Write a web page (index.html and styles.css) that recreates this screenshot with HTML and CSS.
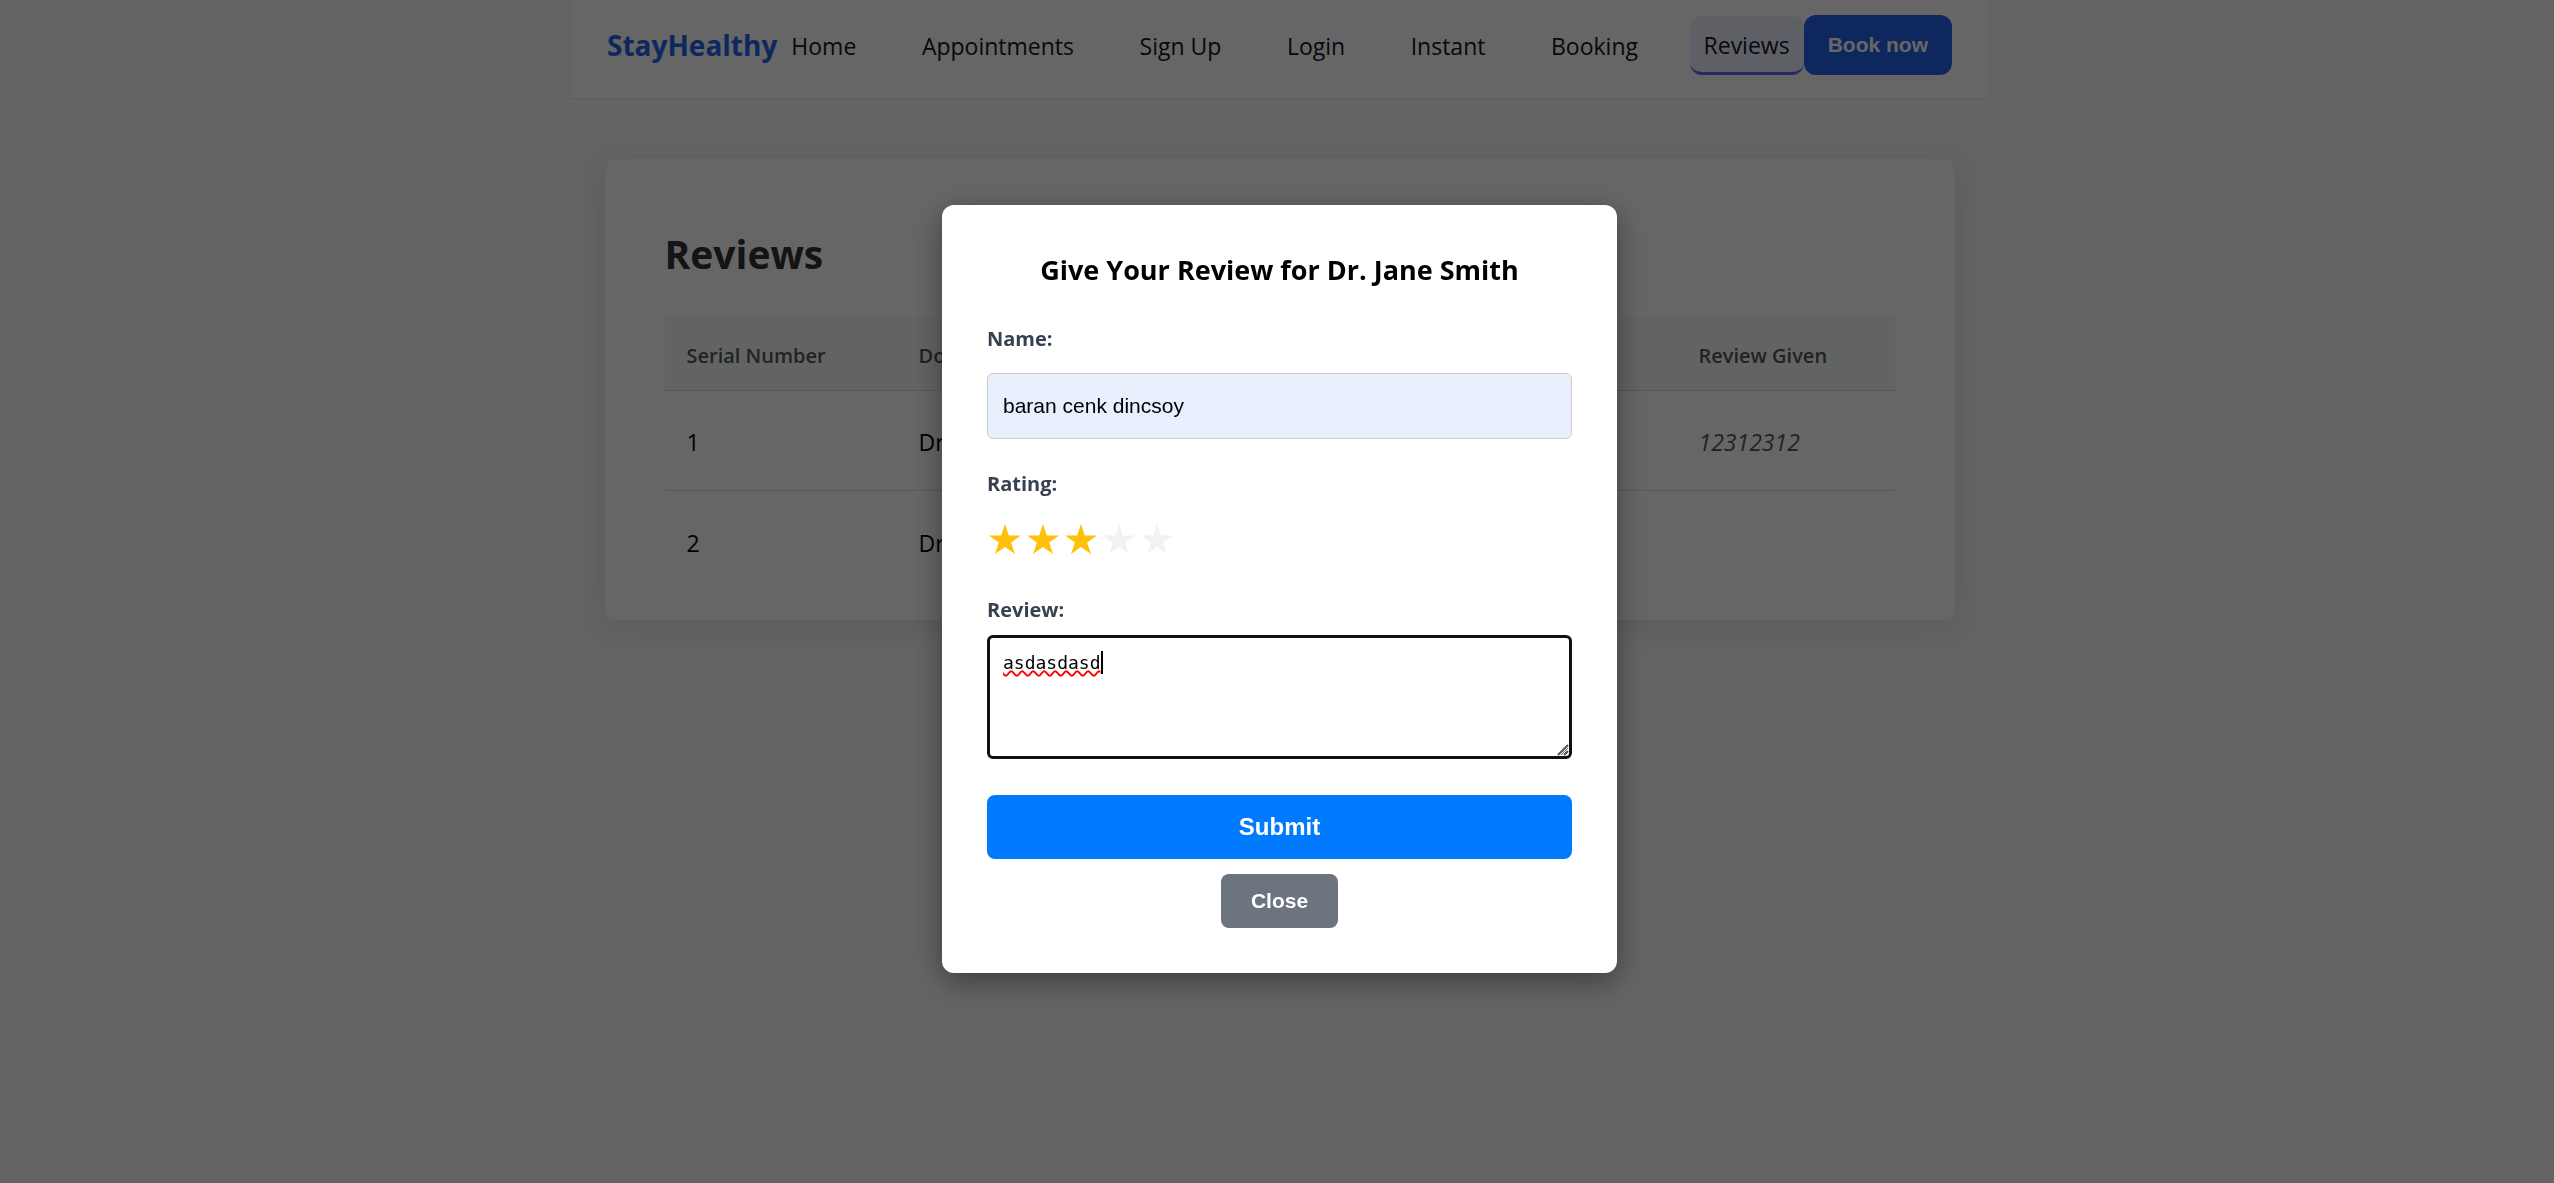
FILE: index.html
```html
<!DOCTYPE html>
<html lang="en">
<head>
<meta charset="utf-8">
<title>StayHealthy - Reviews</title>
<meta name="viewport" content="width=device-width, initial-scale=1">
<link rel="stylesheet" href="styles.css">
</head>
<body>
<div class="page">
  <header class="navbar">
    <a class="brand" href="#">StayHealthy</a>
    <nav class="nav-links">
      <a class="nav-link" href="#">Home</a>
      <a class="nav-link" href="#">Appointments</a>
      <a class="nav-link" href="#">Sign Up</a>
      <a class="nav-link" href="#">Login</a>
      <a class="nav-link" href="#">Instant</a>
      <a class="nav-link" href="#">Booking</a>
      <a class="nav-link nav-link-active" href="#" aria-current="page">Reviews</a>
    </nav>
    <button class="book-button" type="button">Book now</button>
  </header>

  <main class="card">
    <h1 class="card-title">Reviews</h1>
    <table class="reviews">
      <thead>
        <tr>
          <th class="col-serial" scope="col">Serial Number</th>
          <th scope="col">Doctor</th>
          <th class="col-given" scope="col">Review Given</th>
        </tr>
      </thead>
      <tbody>
        <tr>
          <td>1</td>
          <td>Dr. John Doe</td>
          <td class="given">12312312</td>
        </tr>
        <tr>
          <td>2</td>
          <td>Dr. Jane Smith</td>
          <td class="given"></td>
        </tr>
      </tbody>
    </table>
  </main>
</div>

<div class="overlay">
  <section class="modal" role="dialog" aria-modal="true" aria-labelledby="modal-title">
    <h2 class="modal-title" id="modal-title">Give Your Review for Dr. Jane Smith</h2>
    <form class="form">
      <label class="label" for="name">Name:</label>
      <input class="text-input" id="name" type="text" value="baran cenk dincsoy">

      <fieldset class="rating">
        <legend class="label">Rating:</legend>
        <div class="stars">
          <label class="star star-on"><input class="star-input" type="radio" name="rating" value="1" aria-label="1 star"><svg class="star-icon" viewBox="0 0 32 30" aria-hidden="true"><path d="M16 0l3.800 11.400H32l-9.900 7.200L25.900 30 16 22.900 6.100 30l3.800-11.400L0 11.400h12.200z"/></svg></label>
          <label class="star star-on"><input class="star-input" type="radio" name="rating" value="2" aria-label="2 stars"><svg class="star-icon" viewBox="0 0 32 30" aria-hidden="true"><path d="M16 0l3.800 11.400H32l-9.900 7.200L25.900 30 16 22.900 6.100 30l3.800-11.400L0 11.400h12.200z"/></svg></label>
          <label class="star star-on"><input class="star-input" type="radio" name="rating" value="3" aria-label="3 stars" checked><svg class="star-icon" viewBox="0 0 32 30" aria-hidden="true"><path d="M16 0l3.800 11.400H32l-9.900 7.200L25.900 30 16 22.900 6.100 30l3.800-11.400L0 11.400h12.200z"/></svg></label>
          <label class="star"><input class="star-input" type="radio" name="rating" value="4" aria-label="4 stars"><svg class="star-icon" viewBox="0 0 32 30" aria-hidden="true"><path d="M16 0l3.800 11.400H32l-9.900 7.200L25.900 30 16 22.900 6.100 30l3.800-11.400L0 11.400h12.200z"/></svg></label>
          <label class="star"><input class="star-input" type="radio" name="rating" value="5" aria-label="5 stars"><svg class="star-icon" viewBox="0 0 32 30" aria-hidden="true"><path d="M16 0l3.800 11.400H32l-9.900 7.200L25.900 30 16 22.900 6.100 30l3.800-11.400L0 11.400h12.200z"/></svg></label>
        </div>
      </fieldset>

      <label class="label" for="review">Review:</label>
      <div class="review-box">
        <textarea class="review-input" id="review">asdasdasd</textarea>
        <span class="caret"></span>
        <svg class="grip" viewBox="0 0 12 12" aria-hidden="true"><path d="M1 11L11 1M7 11l4-4"/></svg>
      </div>

      <button class="submit-button" type="submit">Submit</button>
      <button class="close-button" type="button">Close</button>
    </form>
  </section>
</div>
</body>
</html>
```
FILE: styles.css
```css
:root {
  --gutter: 5px;
  --ui: "Open Sans", "Noto Sans", sans-serif;
  --control: "Liberation Sans", Arial, sans-serif;
}

* {
  box-sizing: border-box;
}

body {
  margin: 0;
  min-height: 100vh;
  background: #f9f9f9;
  color: #000;
  font-family: var(--ui);
}

.page {
  padding-left: var(--gutter);
}

/* Navigation */
.navbar {
  display: flex;
  align-items: center;
  max-width: 1417px;
  margin: 0 auto;
  padding: 15px 36px 23px;
  background: #fff;
  border-bottom: 1px solid #e5e7eb;
}

.brand {
  color: #2563eb;
  font-size: 28px;
  font-weight: 700;
  line-height: 40px;
  text-decoration: none;
}

.nav-links {
  display: flex;
  flex: 1;
  align-items: center;
  justify-content: space-between;
}

.nav-link {
  padding: 13px 14px 11px;
  color: #0f172a;
  font-size: 23px;
  line-height: 34px;
  text-decoration: none;
}

.nav-link-active {
  background: #eef0ff;
  border-bottom: 3px solid #6366f1;
  border-radius: 12px;
  line-height: 32px;
}

.book-button {
  height: 60px;
  padding: 0 24px;
  border: 0;
  border-radius: 12px;
  background: #2563eb;
  color: #fff;
  font: 700 21px/24px var(--control);
}

/* Reviews card */
.card {
  max-width: 1350px;
  margin: 60px auto 0;
  padding: 60px 60px 29px;
  background: #fff;
  border-radius: 12px;
  box-shadow: 0 6px 30px rgba(0, 0, 0, 0.1);
}

.card-title {
  margin: 0;
  padding-bottom: 28px;
  color: #333;
  font-size: 39px;
  line-height: 70px;
}

.reviews {
  width: 100%;
  border-spacing: 0;
  table-layout: fixed;
  text-align: left;
}

.col-serial {
  width: 232px;
}

.col-given {
  width: 218px;
}

.reviews th {
  height: 74px;
  padding: 3px 22px 0;
  background: #f5f9f7;
  border-bottom: 1px solid #ddd;
  color: #555;
  font-size: 20px;
  font-weight: 600;
}

.reviews td {
  height: 100px;
  padding: 3px 22px 0;
  border-bottom: 1px solid #ddd;
  font-size: 23px;
}

.reviews tr:last-child td {
  border-bottom: 0;
}

.reviews .given {
  color: #555;
  font-style: italic;
}

/* Review dialog */
.overlay {
  position: fixed;
  inset: 0;
  display: flex;
  align-items: center;
  justify-content: center;
  padding: 0 0 var(--gutter) var(--gutter);
  background: rgba(0, 0, 0, 0.6);
}

.modal {
  width: 675px;
  padding: 45px;
  background: #fff;
  border-radius: 12px;
  box-shadow: 0 8px 30px rgba(0, 0, 0, 0.4);
}

.modal-title {
  margin: 0 0 32px;
  font-size: 27px;
  line-height: 40px;
  text-align: center;
}

.form {
  display: flex;
  flex-direction: column;
}

.label {
  padding: 0;
  color: #374151;
  font-size: 20px;
  font-weight: 700;
  line-height: 34px;
}

.text-input {
  height: 66px;
  margin: 17px 0 28px;
  padding: 0 15px;
  background: #e8f0fe;
  border: 1px solid #ccc;
  border-radius: 6px;
  color: #000;
  font: 21px/24px var(--control);
}

.rating {
  margin: 0;
  padding: 0;
  border: 0;
}

.stars {
  display: flex;
  gap: 6px;
  padding: 23px 2px 39px;
}

.star {
  position: relative;
  width: 32px;
  height: 30px;
  color: #f2f2f2;
}

.star-on {
  color: #ffc107;
}

.star-input {
  position: absolute;
  inset: 0;
  margin: 0;
  opacity: 0;
}

.star-icon {
  display: block;
  width: 32px;
  height: 30px;
  fill: currentColor;
}

.review-box {
  position: relative;
  margin: 8px 0 36px;
}

.review-input {
  display: block;
  width: 100%;
  height: 124px;
  padding: 13px;
  border: 3px solid #101010;
  border-radius: 6px;
  outline: 0;
  color: #000;
  font: 18px/24px "DejaVu Sans Mono", monospace;
  text-decoration: underline wavy #f00 2px;
  text-decoration-skip-ink: none;
  resize: vertical;
}

.caret {
  position: absolute;
  top: 16px;
  left: 114px;
  width: 2px;
  height: 23px;
  background: #000;
}

.grip {
  position: absolute;
  right: 3px;
  bottom: 3px;
  width: 12px;
  height: 12px;
  fill: none;
  stroke: #555;
  stroke-width: 2;
  pointer-events: none;
}

.submit-button,
.close-button {
  border: 0;
  border-radius: 8px;
  color: #fff;
}

.submit-button {
  height: 64px;
  margin-bottom: 15px;
  background: #007bff;
  font: 700 24px/28px var(--control);
}

.close-button {
  align-self: center;
  height: 54px;
  padding: 0 30px;
  background: #6c757d;
  font: 700 21px/24px var(--control);
}
```
